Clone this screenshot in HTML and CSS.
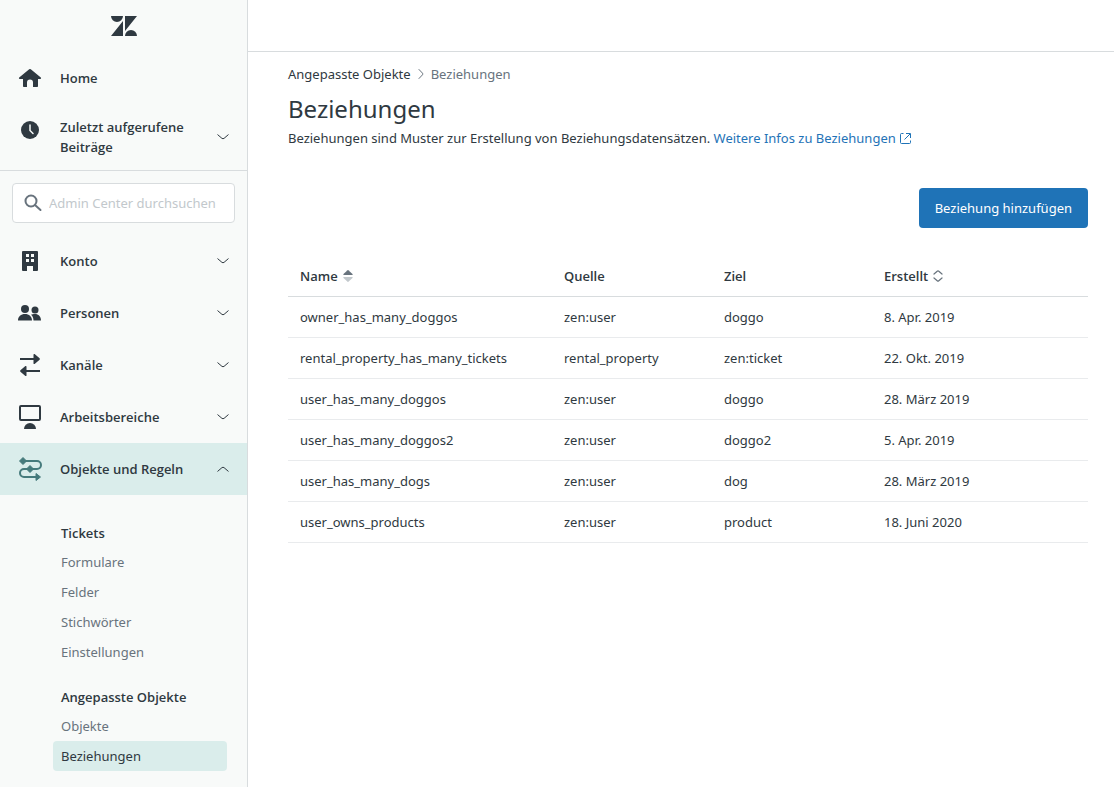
FILE: index.html
```html
<!DOCTYPE html>
<html lang="de">
<head>
<meta charset="utf-8">
<meta name="viewport" content="width=device-width, initial-scale=1">
<title>Beziehungen – Admin Center</title>
<link rel="stylesheet" href="styles.css">
</head>
<body>
<svg class="defs" aria-hidden="true">
  <symbol id="chevron" viewBox="0 0 12 12"><path d="M.8 3.8 4.9 7.3a1.7 1.7 0 0 0 2.2 0l4.1-3.5" fill="none" stroke="currentColor" stroke-linecap="round"/></symbol>
</svg>
<div class="app">
  <aside class="sidebar">
    <div class="brand">
      <svg width="26" height="20" viewBox="0 0 26 20" role="img" aria-label="Zendesk" fill="currentColor"><path d="M0 0h12a6 6 0 0 1-12 0zM12 5v15H0zM14 0h12L14 15zM14 20a6 6 0 0 1 12 0z"/></svg>
    </div>
    <nav class="nav" aria-label="Übersicht">
      <a class="item" href="#">
        <svg class="icon" viewBox="0 0 26 26" fill="currentColor"><path d="M12.2 4.300a1.200 1.200 0 0 1 1.600 0l10 8.200c.5.500.3 1.500-.5 1.500H21v7.200a.8.8 0 0 1-.8.8H16v-4.500a3 3 0 0 0-6 0V22H6.800a.8.8 0 0 1-.8-.8V14H2.700c-.8 0-1-1-.5-1.500z"/></svg>
        <span class="label">Home</span>
      </a>
      <button class="item item-tall" type="button" aria-expanded="false">
        <svg class="icon" viewBox="0 0 26 26"><circle cx="13" cy="13" r="9" fill="currentColor"/><path d="M13 8v5.500l3 3" fill="none" stroke="#f8faf9" stroke-width="1.500" stroke-linecap="round"/></svg>
        <span class="label">Zuletzt aufgerufene Beiträge</span>
        <svg class="chevron"><use href="#chevron"/></svg>
      </button>
    </nav>
    <div class="search">
      <label class="search-box">
        <svg width="18" height="18" viewBox="0 0 18 18" fill="none" stroke="currentColor" stroke-width="2" aria-hidden="true"><circle cx="7" cy="7" r="5.500"/><path d="m11 11 5.500 5" stroke-linecap="round"/></svg>
        <input type="text" aria-label="Admin Center durchsuchen" placeholder="Admin Center durchsuchen">
      </label>
    </div>
    <nav class="nav" aria-label="Admin Center">
      <button class="item" type="button" aria-expanded="false">
        <svg class="icon" viewBox="0 0 26 26" fill="currentColor"><path fill-rule="evenodd" d="M6 3h14a1 1 0 0 1 1 1v18a1 1 0 0 1-1 1h-4v-5h-6v5H6a1 1 0 0 1-1-1V4a1 1 0 0 1 1-1zm3 3v3h3V6zm5 0v3h3V6zm-5 5v3h3v-3zm5 0v3h3v-3z"/></svg>
        <span class="label">Konto</span>
        <svg class="chevron"><use href="#chevron"/></svg>
      </button>
      <button class="item" type="button" aria-expanded="false">
        <svg class="icon" viewBox="0 0 26 26" fill="currentColor"><circle cx="8" cy="9" r="4"/><circle cx="18" cy="10" r="3.500"/><path d="M1 20.500c0-4 3-6.500 7-6.500s7 2.500 7 6.500zM14 14.800c1-.6 2.400-.8 4-.8 3.500 0 6 2.500 6 6.500h-7.500c0-2.500-.8-4.400-2.500-5.700z"/></svg>
        <span class="label">Personen</span>
        <svg class="chevron"><use href="#chevron"/></svg>
      </button>
      <button class="item" type="button" aria-expanded="false">
        <svg class="icon" viewBox="0 0 26 26" fill="currentColor"><path d="M3 6h13.500V2.600c0-.6.7-.9 1.100-.5l5 4.200c.4.400.4 1 0 1.400l-5 4.200c-.4.400-1.100.1-1.100-.5V8H3zM23 18H9.500v-3.400c0-.6-.7-.9-1.100-.5l-5 4.200c-.4.400-.4 1 0 1.400l5 4.200c.4.400 1.100.1 1.100-.5V20H23z"/></svg>
        <span class="label">Kanäle</span>
        <svg class="chevron"><use href="#chevron"/></svg>
      </button>
      <button class="item" type="button" aria-expanded="false">
        <svg class="icon" viewBox="0 0 26 26"><rect x="3" y="2" width="20" height="14" rx="1" fill="none" stroke="currentColor" stroke-width="2"/><path d="M7 25a6 6 0 0 1 12 0z" fill="currentColor"/></svg>
        <span class="label">Arbeitsbereiche</span>
        <svg class="chevron"><use href="#chevron"/></svg>
      </button>
      <button class="item item-open" type="button" aria-expanded="true">
        <svg class="icon" viewBox="0 0 26 26" fill="currentColor"><path d="M6 5h14a4 4 0 0 1 0 8H7a4 4 0 0 0 0 8h12" fill="none" stroke="currentColor" stroke-width="2"/><path stroke="currentColor" stroke-linejoin="round" d="m6 1.500 3.500 3.500L6 8.500 2.500 5zM13 9.500l3.500 3.500-3.500 3.500L9.500 13zM19 17.500l4.500 3.500-4.500 3.500z"/></svg>
        <span class="label">Objekte und Regeln</span>
        <svg class="chevron"><use href="#chevron"/></svg>
      </button>
      <div class="subnav">
        <section class="group">
          <h2>Tickets</h2>
          <a href="#">Formulare</a>
          <a href="#">Felder</a>
          <a href="#">Stichwörter</a>
          <a href="#">Einstellungen</a>
        </section>
        <section class="group">
          <h2>Angepasste Objekte</h2>
          <a href="#">Objekte</a>
          <a href="#" class="current" aria-current="page">Beziehungen</a>
        </section>
      </div>
    </nav>
  </aside>
  <div class="page">
    <header class="topbar"></header>
    <main class="content">
      <nav class="breadcrumb" aria-label="Brotkrumen">
        <a href="#">Angepasste Objekte</a>
        <svg width="12" height="12" viewBox="0 0 12 12" fill="none" stroke="currentColor" aria-hidden="true"><path d="m4 1.500 3.500 3.700a1.200 1.200 0 0 1 0 1.600L4 10.500" stroke-linecap="round"/></svg>
        <span>Beziehungen</span>
      </nav>
      <h1>Beziehungen</h1>
      <p class="intro">Beziehungen sind Muster zur Erstellung von Beziehungsdatensätzen. <a href="#">Weitere Infos zu Beziehungen <svg width="11" height="11" viewBox="0 0 11 11" fill="none" stroke="currentColor" aria-hidden="true"><path d="M3.500.5h-2a1 1 0 0 0-1 1v8a1 1 0 0 0 1 1h8a1 1 0 0 0 1-1v-2M6 .5h4.500V5M10 1 4.500 6.500"/></svg></a></p>
      <div class="actions"><button class="primary" type="button">Beziehung hinzufügen</button></div>
      <table>
        <colgroup><col class="col-name"><col class="col-end"><col class="col-end"><col></colgroup>
        <thead>
          <tr>
            <th aria-sort="ascending"><button class="sort" type="button">Name <svg width="10" height="12" viewBox="0 0 10 12"><path d="M5.400.2 9.500 4c.4.400.2 1-.3 1H.8c-.5 0-.7-.6-.3-1L4.600.2a.6.6 0 0 1 .8 0z" fill="#68737d"/><path d="M4.600 11.800.5 8c-.4-.4-.2-1 .3-1h8.400c.5 0 .7.600.3 1l-4.100 3.800a.6.6 0 0 1-.8 0z" fill="#c2c8cc"/></svg></button></th>
            <th>Quelle</th>
            <th>Ziel</th>
            <th><button class="sort" type="button">Erstellt <svg width="10" height="12" viewBox="0 0 10 12" fill="none" stroke="#68737d" stroke-width="1.200" stroke-linecap="round"><path d="m1 4 3.500-3a.7.7 0 0 1 1 0L9 4M1 8l3.500 3a.7.7 0 0 0 1 0L9 8"/></svg></button></th>
          </tr>
        </thead>
        <tbody>
          <tr><td>owner_has_many_doggos</td><td>zen:user</td><td>doggo</td><td>8. Apr. 2019</td></tr>
          <tr><td>rental_property_has_many_tickets</td><td>rental_property</td><td>zen:ticket</td><td>22. Okt. 2019</td></tr>
          <tr><td>user_has_many_doggos</td><td>zen:user</td><td>doggo</td><td>28. März 2019</td></tr>
          <tr><td>user_has_many_doggos2</td><td>zen:user</td><td>doggo2</td><td>5. Apr. 2019</td></tr>
          <tr><td>user_has_many_dogs</td><td>zen:user</td><td>dog</td><td>28. März 2019</td></tr>
          <tr><td>user_owns_products</td><td>zen:user</td><td>product</td><td>18. Juni 2020</td></tr>
        </tbody>
      </table>
    </main>
  </div>
</div>
</body>
</html>
```
FILE: styles.css
```css
* { box-sizing: border-box; }

body {
  margin: 0;
  color: #2f3941;
  background: #fff;
  font: 13px/20px "Segoe UI", "Noto Sans", "Open Sans", sans-serif;
}

a { color: inherit; text-decoration: none; }
button, input { font: inherit; color: inherit; }
h1, h2, p { margin: 0; }
.defs { position: absolute; width: 0; height: 0; }

.app { display: flex; min-height: 100vh; }

.sidebar {
  flex: 0 0 248px;
  min-width: 0;
  background: #f8faf9;
  border-right: 1px solid #d8dcde;
}

.brand { display: flex; justify-content: center; align-items: center; height: 52px; }

.nav { display: flex; flex-direction: column; }

.item {
  display: flex;
  align-items: center;
  width: 100%;
  min-height: 52px;
  padding: 0 18px 0 17px;
  border: 0;
  background: none;
  font-family: "Segoe UI", "Open Sans", sans-serif;
  font-weight: 600;
  text-align: left;
  cursor: pointer;
}

.item-tall { min-height: 66px; padding-top: 13px; padding-bottom: 13px; }
.item-tall .icon { align-self: flex-start; }
.item-open { background: #daedeb; }
.item-open .icon { color: #467b7c; }
.item-open .chevron { transform: rotate(180deg); }

.icon { flex: none; width: 26px; height: 26px; margin-right: 17px; }
.label { flex: 1; padding-right: 24px; }
.chevron { flex: none; width: 12px; height: 12px; }

.search { padding: 12px; border-top: 1px solid #d8dcde; }

.search-box {
  display: flex;
  align-items: center;
  gap: 7px;
  height: 40px;
  padding: 0 11px;
  border: 1px solid #d8dcde;
  border-radius: 4px;
  background: #fff;
  color: #68737d;
}

.search-box svg { flex: none; }
.search-box input { flex: 1; width: 100%; min-width: 0; padding: 0; border: 0; outline: 0; background: none; }
.search-box input::placeholder { color: #c2c8cc; opacity: 1; }

.subnav { display: flex; flex-direction: column; gap: 20px; padding: 28px 20px 16px 53px; }
.group { display: flex; flex-direction: column; }
.group h2 { padding: 0 8px 4px; font: 600 13px/20px "Segoe UI", "Open Sans", sans-serif; }
.group a { padding: 5px 8px; border-radius: 4px; color: #68737d; }
.group .current { background: #daedeb; color: #2f3941; }

.page { flex: 1; min-width: 0; }
.topbar { height: 52px; border-bottom: 1px solid #d8dcde; }
.content { padding: 12px 26px 40px 40px; }

.breadcrumb { display: flex; align-items: center; gap: 4px; color: #68737d; }
.breadcrumb a { color: #2f3941; }

h1 { margin-top: 9px; font-size: 24px; line-height: 32px; font-weight: 400; }
.intro { margin-top: 3px; }
.intro a { color: #1f73b7; }
.intro svg { margin-left: 1px; vertical-align: -1px; }

.actions { display: flex; justify-content: flex-end; margin-top: 40px; }

.primary {
  height: 40px;
  padding: 0 16px;
  border: 0;
  border-radius: 4px;
  background: #1f73b7;
  color: #fff;
  cursor: pointer;
}

table { width: 100%; margin-top: 28px; border-collapse: collapse; table-layout: fixed; }
.col-name { width: 33%; }
.col-end { width: 20%; }
th, td { height: 41px; padding: 0 12px; border-bottom: 1px solid #e9ebed; text-align: left; }
th { height: 40px; border-bottom-color: #d8dcde; font-family: "Segoe UI", "Open Sans", sans-serif; font-weight: 600; }
.sort { display: inline-flex; align-items: center; gap: 5px; padding: 0; border: 0; background: none; cursor: pointer; }
```
